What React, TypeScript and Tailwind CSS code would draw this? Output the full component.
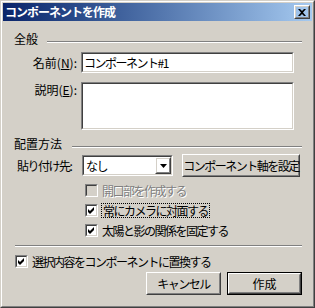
import React from "react";

const font = "font-['MS_UI_Gothic','Noto_Sans_CJK_JP',sans-serif]";

// sunken 2px edge for input fields
function Sunken({ className, children, disabled }: { className?: string; children?: React.ReactNode; disabled?: boolean }) {
    return (
        <div className={"border border-t-[#808080] border-l-[#808080] border-r-white border-b-white " + (className || "")}>
            <div className={"h-full w-full border border-t-[#404040] border-l-[#404040] border-r-[#d4d0c8] border-b-[#d4d0c8] " + (disabled ? "bg-[#d4d0c8]" : "bg-white")}>
                {children}
            </div>
        </div>
    );
}

// raised button edge
function Raised({ className, children, isDefault }: { className?: string; children?: React.ReactNode; isDefault?: boolean }) {
    const inner = (
        <div className="h-full w-full border border-t-white border-l-white border-r-[#404040] border-b-[#404040]">
            <div className="flex h-full w-full items-center justify-center whitespace-nowrap border border-t-[#d4d0c8] border-l-[#d4d0c8] border-r-[#808080] border-b-[#808080]">
                {children}
            </div>
        </div>
    );
    if (isDefault) {
        return <div className={"border border-black " + (className || "")}>{inner}</div>;
    }
    return <div className={className}>{inner}</div>;
}

function Check({ checked, disabled }: { checked?: boolean; disabled?: boolean }) {
    return (
        <Sunken className="h-[13px] w-[13px] shrink-0" disabled={disabled}>
            {checked && (
                <svg width="7" height="7" viewBox="0 0 7 7" className="ml-[1px] mt-[1px]">
                    <path d="M0 2 L2 4 L6 0 L6 3 L2 7 L0 5 Z" fill="#000" />
                </svg>
            )}
        </Sunken>
    );
}

function Etched({ className }: { className?: string }) {
    return <div className={"h-[2px] border-t border-t-[#808080] border-b border-b-white " + (className || "")} />;
}

export default function App() {
    return (
        <div className={"h-[308px] w-[315px] overflow-hidden border border-t-[#d4d0c8] border-l-[#d4d0c8] border-r-[#404040] border-b-[#404040] bg-[#d4d0c8] text-[12px] leading-[14px] tracking-[-1.5px] text-black " + font}>
            <div className="h-full w-full border border-t-white border-l-white border-r-[#808080] border-b-[#808080] p-[1px]">
                {/* title bar */}
                <div className="flex h-[18px] items-center justify-between bg-gradient-to-r from-[#0a246a] to-[#a6caf0] pl-[2px] pr-[2px]">
                    <span className="font-bold tracking-[-1px] text-white">コンポーネントを作成</span>
                    <Raised className="h-[14px] w-[16px]">
                        <svg width="8" height="7" viewBox="0 0 8 7">
                            <path d="M0 0 H2 L4 2 L6 0 H8 L5 3.5 L8 7 H6 L4 5 L2 7 H0 L3 3.5 Z" fill="#000" />
                        </svg>
                    </Raised>
                </div>

                <div className="flex flex-col pl-[11px] pr-[10px]">
                    {/* 全般 */}
                    <div className="mt-[11px] flex h-[14px] items-center">
                        <span className="tracking-normal">全般</span>
                        <Etched className="ml-[9px] mt-[6px] flex-1" />
                    </div>

                    <div className="mt-[6px] flex h-[21px] items-center">
                        <div className="w-[64px] pr-[1px] text-right tracking-normal">名前(<u>N</u>):</div>
                        <Sunken className="ml-[3px] h-[21px] w-[213px]">
                            <div className="pl-[1px] pt-[2px]">コンポーネント#1</div>
                        </Sunken>
                    </div>

                    <div className="mt-[9px] flex h-[48px]">
                        <div className="w-[64px] pr-[1px] pt-[1px] text-right tracking-normal">説明(<u>E</u>):</div>
                        <Sunken className="ml-[3px] h-[48px] w-[213px]" />
                    </div>

                    {/* 配置方法 */}
                    <div className="mt-[7px] flex h-[14px] items-center">
                        <span className="tracking-normal">配置方法</span>
                        <Etched className="ml-[10px] mt-[6px] flex-1" />
                    </div>

                    <div className="mt-[3px] flex h-[23px] items-center">
                        <div className="ml-[3px] w-[65px]">貼り付け先:</div>
                        <Sunken className="h-[21px] w-[91px]">
                            <div className="flex h-full items-center justify-between">
                                <span className="pl-[2px]">なし</span>
                                <Raised className="h-[17px] w-[16px]">
                                    <svg width="7" height="4" viewBox="0 0 7 4">
                                        <path d="M0 0 H7 L3.5 4 Z" fill="#000" />
                                    </svg>
                                </Raised>
                            </div>
                        </Sunken>
                        <Raised className="ml-[9px] h-[23px] w-[118px]">
                            <span>コンポーネント軸を設定</span>
                        </Raised>
                    </div>

                    {/* checkboxes */}
                    <div className="ml-[71px] mt-[7px] flex flex-col gap-[7px]">
                        <div className="flex h-[13px] items-center gap-[4px]">
                            <Check disabled />
                            <span className="text-[#808080] [text-shadow:1px_1px_0_#fff]">開口部を作成する</span>
                        </div>
                        <div className="flex h-[13px] items-center gap-[3px]">
                            <Check checked />
                            <span className="border border-dotted border-black px-[1px] leading-[13px]">常にカメラに対面する</span>
                        </div>
                        <div className="flex h-[13px] items-center gap-[4px]">
                            <Check checked />
                            <span>太陽と影の関係を固定する</span>
                        </div>
                    </div>

                    <Etched className="ml-[1px] mt-[8px]" />

                    <div className="ml-[1px] mt-[8px] flex h-[13px] items-center gap-[4px]">
                        <Check checked />
                        <span>選択内容をコンポーネントに置換する</span>
                    </div>

                    <div className="mt-[4px] flex justify-end gap-[6px]">
                        <Raised className="h-[23px] w-[75px]">
                            <span>キャンセル</span>
                        </Raised>
                        <Raised className="h-[23px] w-[75px]" isDefault>
                            <span className="tracking-normal">作成</span>
                        </Raised>
                    </div>
                </div>
            </div>
        </div>
    );
}
